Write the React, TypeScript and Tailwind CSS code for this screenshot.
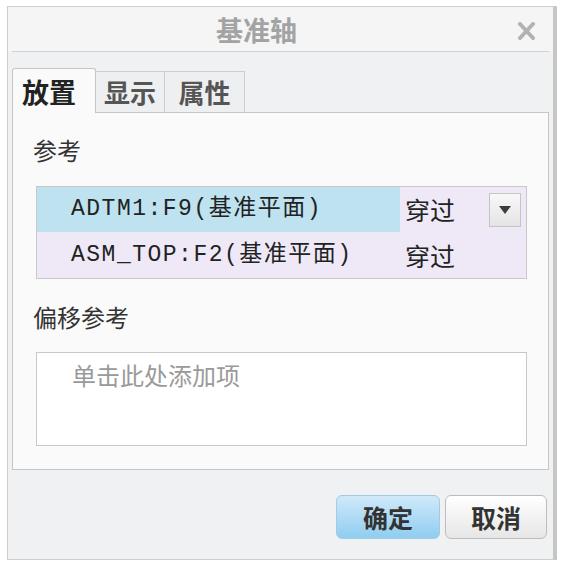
import React from "react"

const cjk = "font-['Noto_Sans_CJK_SC',sans-serif]"
const mono = "font-['Liberation_Mono','Noto_Sans_CJK_SC',monospace]"

function Tab({ label, active, width }: { label: string; active?: boolean; width: string }) {
  if (active) {
    return (
      <div
        className={`${width} h-[45px] -mb-px flex items-center pl-[9px] bg-[#fafafa] border border-b-0 border-[#c6c6c6] rounded-t-[3px] text-[27px] font-bold text-[#222] leading-none z-10`}
      >
        {label}
      </div>
    )
  }
  return (
    <div
      className={`${width} h-[41px] flex items-center justify-center bg-[#eeeff1] border border-l-0 border-[#cdcdcd] border-b-0 text-[26px] font-bold text-[#555] leading-none`}
    >
      {label}
    </div>
  )
}

export default function App() {
  return (
    <div className={`w-[571px] h-[562px] bg-white pt-[6px] pl-[7px] ${cjk}`}>
      <div className="w-[550px] h-[554px] flex flex-col border border-[#cdcdcd] border-r-[4px] border-r-[#c6c6c6] bg-[#f0f1f3]">
        {/* title bar */}
        <div className="h-[44px] flex items-center bg-[#f5f5f6] relative">
          <div className="flex-1 text-center pr-[48px] text-[27px] font-bold text-[#a3a3a3] leading-none">基准轴</div>
          <svg className="absolute right-[17px] top-[15px]" width="19" height="18" viewBox="0 0 19 18">
            <path d="M3 2L16 16M16 2L3 16" stroke="#b2b2b2" strokeWidth="4" strokeLinecap="round" />
          </svg>
        </div>
        <div className="mx-[4px] h-px bg-[#d2d2d2]" />
        <div className="h-[16px]" />

        {/* tabs */}
        <div className="flex items-end mx-[4px]">
          <Tab label="放置" active width="w-[84px]" />
          <Tab label="显示" width="w-[69px]" />
          <Tab label="属性" width="w-[80px]" />
        </div>

        {/* panel */}
        <div className="mx-[4px] h-[358px] bg-[#fafafa] border border-[#c6c6c6] flex flex-col">
          <div className="mt-[25px] ml-[20px] text-[24px] leading-[24px] text-[#333]">参考</div>

          <div className="mt-[24px] ml-[23px] w-[491px] h-[93px] border border-[#c8c8c8] bg-[#efe9f7] flex flex-col">
            <div className="h-[45px] flex items-center">
              <div className="w-[363px] h-full bg-[#bee2f0] flex items-center pl-[34px]">
                <span className={`${mono} text-[23px] tracking-[1.5px] text-[#222] leading-none`}>ADTM1:F9(基准平面)</span>
              </div>
              <span className="ml-[5px] text-[25px] text-[#222] leading-none">穿过</span>
              <div className="ml-auto mr-[5px] w-[32px] h-[34px] border border-[#c4c4c4] bg-gradient-to-b from-[#f8f8f8] to-[#e4e4e4] flex items-center justify-center">
                <svg width="12" height="8" viewBox="0 0 12 8">
                  <path d="M0 0H12L6 8Z" fill="#3c3c3c" />
                </svg>
              </div>
            </div>
            <div className="h-[46px] flex items-center">
              <div className="w-[368px] flex items-center pl-[34px]">
                <span className={`${mono} text-[23px] tracking-[1.5px] text-[#222] leading-none`}>ASM_TOP:F2(基准平面)</span>
              </div>
              <span className="text-[25px] text-[#222] leading-none">穿过</span>
            </div>
          </div>

          <div className="mt-[26px] ml-[20px] text-[24px] leading-[24px] text-[#333]">偏移参考</div>

          <div className="mt-[23px] ml-[23px] w-[491px] h-[94px] border border-[#c8c8c8] bg-white pl-[35px] pt-[10px]">
            <span className="text-[24px] leading-[24px] text-[#9a9a9a]">单击此处添加项</span>
          </div>
        </div>

        {/* footer */}
        <div className="flex-1 flex justify-end items-start pt-[25px] pr-[6px] gap-[5px]">
          <button className="w-[104px] h-[44px] rounded-[6px] border border-[#9fcbe6] bg-gradient-to-b from-[#cfe9f9] to-[#8fcdf0] text-[25px] font-bold text-[#333] leading-none">
            确定
          </button>
          <button className="w-[102px] h-[44px] rounded-[6px] border border-[#bdbdbd] bg-gradient-to-b from-[#ffffff] to-[#e6e6e6] text-[25px] font-bold text-[#333] leading-none">
            取消
          </button>
        </div>
      </div>
    </div>
  )
}
